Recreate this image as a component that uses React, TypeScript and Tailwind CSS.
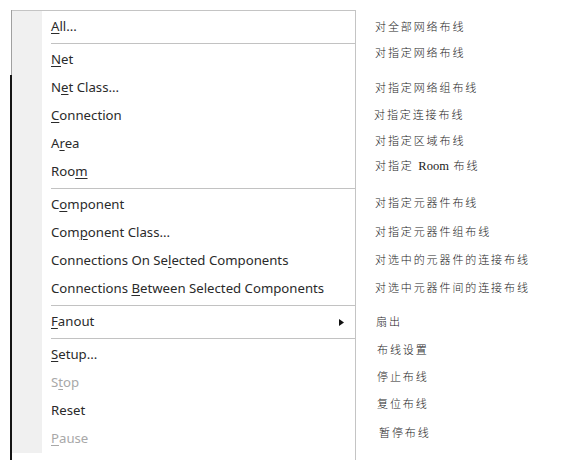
import React from 'react';

type MenuItem =
  | { kind: 'sep' }
  | { kind: 'item'; label: string; u?: number; disabled?: boolean; arrow?: boolean; first?: boolean };

const items: MenuItem[] = [
  { kind: 'item', label: 'All...', u: 0, first: true },
  { kind: 'sep' },
  { kind: 'item', label: 'Net', u: 0 },
  { kind: 'item', label: 'Net Class...', u: 1 },
  { kind: 'item', label: 'Connection', u: 0 },
  { kind: 'item', label: 'Area', u: 1 },
  { kind: 'item', label: 'Room', u: 3 },
  { kind: 'sep' },
  { kind: 'item', label: 'Component', u: 1 },
  { kind: 'item', label: 'Component Class...', u: 3 },
  { kind: 'item', label: 'Connections On Selected Components', u: 17 },
  { kind: 'item', label: 'Connections Between Selected Components', u: 12 },
  { kind: 'sep' },
  { kind: 'item', label: 'Fanout', u: 0, arrow: true },
  { kind: 'sep' },
  { kind: 'item', label: 'Setup...', u: 0 },
  { kind: 'item', label: 'Stop', u: 1, disabled: true },
  { kind: 'item', label: 'Reset' },
  { kind: 'item', label: 'Pause', u: 0, disabled: true },
];

const notes = [
  { text: '对全部网络布线', cls: 'h-[26px] pl-[19px]' },
  { text: '对指定网络布线', cls: 'h-[35px] pl-[19px]' },
  { text: '对指定网络组布线', cls: 'h-[27px] pl-[19px]' },
  { text: '对指定连接布线', cls: 'h-[26px] pl-[18px]' },
  { text: '对指定区域布线', cls: 'h-[25px] pl-[19px]' },
  { text: 'ROOM', cls: 'h-[37px] pl-[19px]' },
  { text: '对指定元器件布线', cls: 'h-[29px] pl-[19px]' },
  { text: '对指定元器件组布线', cls: 'h-[28px] pl-[19px]' },
  { text: '对选中的元器件的连接布线', cls: 'h-[28px] pl-[19px]' },
  { text: '对选中元器件间的连接布线', cls: 'h-[34px] pl-[19px]' },
  { text: '扇出', cls: 'h-[28px] pl-[20px]' },
  { text: '布线设置', cls: 'h-[27px] pl-[21px]' },
  { text: '停止布线', cls: 'h-[27px] pl-[21px]' },
  { text: '复位布线', cls: 'h-[29px] pl-[21px]' },
  { text: '暂停布线', cls: 'h-[20px] pl-[23px]' },
];

const Label: React.FC<{ label: string; u?: number }> = ({ label, u }) => {
  if (u === undefined) return <>{label}</>;
  return (
    <>
      {label.slice(0, u)}
      <span className="underline underline-offset-2 decoration-1">{label[u]}</span>
      {label.slice(u + 1)}
    </>
  );
};

export default function App() {
  return (
    <div className="flex w-[586px] h-[460px] bg-white overflow-hidden">
      {/* window edge on the left */}
      <div className="ml-[10px] w-[2px] flex flex-col">
        <div className="h-[10px]" />
        <div className="h-[65px] w-[1px] ml-[1px] bg-[#a0a0a0]" />
        <div className="flex-1 bg-[#151515]" />
      </div>

      {/* context menu */}
      <div
        className="mt-[10px] w-[344px] flex flex-col border-t border-r border-[#c4c4c4] text-[13.2px] text-[#2a2a2a]"
        style={{ fontFamily: '"Noto Sans", "Open Sans", sans-serif' }}
      >
        {items.map((it, i) =>
          it.kind === 'sep' ? (
            <div key={i} className="flex h-[5px]">
              <div className="w-[30px] bg-[#f0f0f0]" />
              <div className="flex-1 pl-[9px] pt-[2px]">
                <div className="h-[1px] bg-[#c2c2c2]" />
              </div>
            </div>
          ) : (
            <div key={i} className={it.first ? 'flex h-[30px]' : 'flex h-[28px]'}>
              <div className="w-[30px] bg-[#f0f0f0]" />
              <div
                className={`flex-1 flex items-center justify-between pl-[9px] pr-[11px] ${
                  it.first ? 'pt-[2px]' : ''
                } ${it.disabled ? 'text-[#a8a8a8]' : ''}`}
              >
                <span>
                  <Label label={it.label} u={it.u} />
                </span>
                {it.arrow && (
                  <svg width="5" height="7" viewBox="0 0 5 7">
                    <path d="M0 0 L5 3.5 L0 7 Z" fill="#111" />
                  </svg>
                )}
              </div>
            </div>
          )
        )}
      </div>

      {/* annotations */}
      <div
        className="flex flex-col pt-[17px] text-[11px] tracking-[1.9px] text-[#1c1c1c] font-light"
        style={{ fontFamily: '"Liberation Serif", "Noto Sans CJK SC", serif' }}
      >
        {notes.map((n) =>
          n.text === 'ROOM' ? (
            <div key={n.text} className={`${n.cls} leading-[20px] whitespace-nowrap`}>
              对指定 <span className="text-[12.5px] tracking-normal font-normal">Room</span> 布线
            </div>
          ) : (
            <div key={n.text} className={`${n.cls} leading-[20px] whitespace-nowrap`}>
              {n.text}
            </div>
          )
        )}
      </div>
    </div>
  );
}
